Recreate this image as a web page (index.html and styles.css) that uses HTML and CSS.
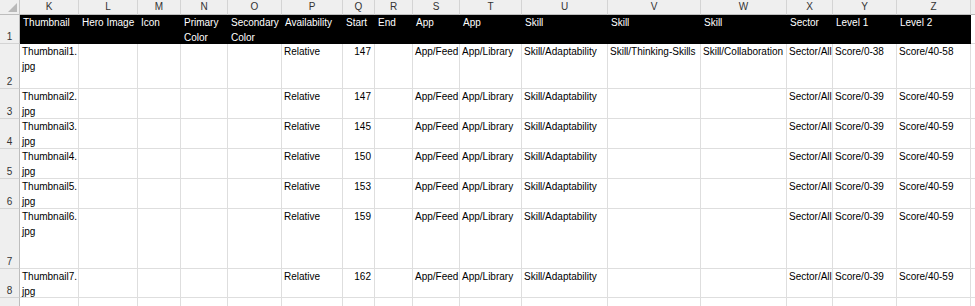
FILE: index.html
```html
<!DOCTYPE html>
<html>
<head>
<meta charset="utf-8">
<link rel="stylesheet" href="styles.css">
</head>
<body>
<div class="sheet">
  <div class="corner"><span class="tri"></span></div>
  <div class="ch">K</div><div class="ch">L</div><div class="ch">M</div><div class="ch">N</div><div class="ch">O</div><div class="ch">P</div><div class="ch">Q</div><div class="ch">R</div><div class="ch">S</div><div class="ch">T</div><div class="ch">U</div><div class="ch">V</div><div class="ch">W</div><div class="ch">X</div><div class="ch">Y</div><div class="ch">Z</div><div class="ch"></div>

  <div class="rh">1</div>
  <div class="c hd">Thumbnail</div><div class="c hd">Hero Image</div><div class="c hd">Icon</div><div class="c hd wrap">Primary Color</div><div class="c hd wrap">Secondary Color</div><div class="c hd">Availability</div><div class="c hd">Start</div><div class="c hd">End</div><div class="c hd">App</div><div class="c hd">App</div><div class="c hd">Skill</div><div class="c hd">Skill</div><div class="c hd">Skill</div><div class="c hd">Sector</div><div class="c hd">Level 1</div><div class="c hd">Level 2</div><div class="c hd last"></div>

  <div class="rh">2</div>
  <div class="c wrap">Thumbnail1.<wbr>jpg</div><div class="c"></div><div class="c"></div><div class="c"></div><div class="c"></div><div class="c">Relative</div><div class="c num">147</div><div class="c"></div><div class="c">App/Feed</div><div class="c">App/Library</div><div class="c">Skill/Adaptability</div><div class="c">Skill/Thinking-Skills</div><div class="c">Skill/Collaboration</div><div class="c">Sector/All</div><div class="c">Score/0-38</div><div class="c">Score/40-58</div><div class="c"></div>

  <div class="rh">3</div>
  <div class="c wrap">Thumbnail2.<wbr>jpg</div><div class="c"></div><div class="c"></div><div class="c"></div><div class="c"></div><div class="c">Relative</div><div class="c num">147</div><div class="c"></div><div class="c">App/Feed</div><div class="c">App/Library</div><div class="c">Skill/Adaptability</div><div class="c"></div><div class="c"></div><div class="c">Sector/All</div><div class="c">Score/0-39</div><div class="c">Score/40-59</div><div class="c"></div>

  <div class="rh">4</div>
  <div class="c wrap">Thumbnail3.<wbr>jpg</div><div class="c"></div><div class="c"></div><div class="c"></div><div class="c"></div><div class="c">Relative</div><div class="c num">145</div><div class="c"></div><div class="c">App/Feed</div><div class="c">App/Library</div><div class="c">Skill/Adaptability</div><div class="c"></div><div class="c"></div><div class="c">Sector/All</div><div class="c">Score/0-39</div><div class="c">Score/40-59</div><div class="c"></div>

  <div class="rh">5</div>
  <div class="c wrap">Thumbnail4.<wbr>jpg</div><div class="c"></div><div class="c"></div><div class="c"></div><div class="c"></div><div class="c">Relative</div><div class="c num">150</div><div class="c"></div><div class="c">App/Feed</div><div class="c">App/Library</div><div class="c">Skill/Adaptability</div><div class="c"></div><div class="c"></div><div class="c">Sector/All</div><div class="c">Score/0-39</div><div class="c">Score/40-59</div><div class="c"></div>

  <div class="rh">6</div>
  <div class="c wrap">Thumbnail5.<wbr>jpg</div><div class="c"></div><div class="c"></div><div class="c"></div><div class="c"></div><div class="c">Relative</div><div class="c num">153</div><div class="c"></div><div class="c">App/Feed</div><div class="c">App/Library</div><div class="c">Skill/Adaptability</div><div class="c"></div><div class="c"></div><div class="c">Sector/All</div><div class="c">Score/0-39</div><div class="c">Score/40-59</div><div class="c"></div>

  <div class="rh">7</div>
  <div class="c wrap">Thumbnail6.<wbr>jpg</div><div class="c"></div><div class="c"></div><div class="c"></div><div class="c"></div><div class="c">Relative</div><div class="c num">159</div><div class="c"></div><div class="c">App/Feed</div><div class="c">App/Library</div><div class="c">Skill/Adaptability</div><div class="c"></div><div class="c"></div><div class="c">Sector/All</div><div class="c">Score/0-39</div><div class="c">Score/40-59</div><div class="c"></div>

  <div class="rh">8</div>
  <div class="c wrap">Thumbnail7.<wbr>jpg</div><div class="c"></div><div class="c"></div><div class="c"></div><div class="c"></div><div class="c">Relative</div><div class="c num">162</div><div class="c"></div><div class="c">App/Feed</div><div class="c">App/Library</div><div class="c">Skill/Adaptability</div><div class="c"></div><div class="c"></div><div class="c">Sector/All</div><div class="c">Score/0-39</div><div class="c">Score/40-59</div><div class="c"></div>

  <div class="rh">9</div>
  <div class="c"></div><div class="c"></div><div class="c"></div><div class="c"></div><div class="c"></div><div class="c"></div><div class="c"></div><div class="c"></div><div class="c"></div><div class="c"></div><div class="c"></div><div class="c"></div><div class="c"></div><div class="c"></div><div class="c"></div><div class="c"></div><div class="c"></div>
</div>
</body>
</html>
```

FILE: styles.css
```css
html, body {
  margin: 0;
  padding: 0;
  background: #ffffff;
  overflow: hidden;
}

.sheet {
  width: 975px;
  height: 306px;
  overflow: hidden;
  display: grid;
  grid-template-columns: 20px 59px 59px 43px 47px 54px 61px 32px 38px 47px 62px 86px 93px 86px 46px 64px 74px 20px;
  grid-template-rows: 15px 29px 45px 30px 30px 30px 30px 60px 29px 20px;
  font-family: "Liberation Sans", Arial, sans-serif;
  font-size: 10px;
  line-height: 14.5px;
  color: #000;
}

.sheet > div {
  box-sizing: border-box;
}

.corner {
  background: #efefef;
  border-right: 1px solid #c6c6c6;
  border-bottom: 1px solid #bdbdbd;
  display: flex;
  align-items: flex-end;
  justify-content: flex-end;
  padding: 0 2px 2px 0;
}

.tri {
  width: 0;
  height: 0;
  border-left: 9px solid transparent;
  border-bottom: 9px solid #b9b9b9;
}

.ch {
  background: #efefef;
  border-right: 1px solid #d4d4d4;
  border-bottom: 1px solid #bdbdbd;
  text-align: center;
  color: #333;
  line-height: 14px;
  font-size: 10px;
  overflow: hidden;
}

.rh {
  background: #efefef;
  border-right: 1px solid #bdbdbd;
  border-bottom: 1px solid #d4d4d4;
  color: #333;
  font-size: 10px;
  display: flex;
  align-items: flex-end;
  justify-content: center;
  padding-bottom: 0;
  line-height: 12px;
}

.c {
  border-right: 1px solid #dedede;
  border-bottom: 1px solid #dedede;
  padding: 1px 0 0 2px;
  white-space: nowrap;
  overflow: visible;
}

.c.wrap {
  white-space: normal;
}

.c.hd {
  background: #000;
  color: #fff;
  border-right-color: #000;
  border-bottom-color: #000;
  padding-left: 3px;
}

.c.hd.last {
  background: #fff;
  border-right-color: #dedede;
  border-bottom-color: #dedede;
}

.c.num {
  text-align: right;
  padding-right: 3px;
}
```
